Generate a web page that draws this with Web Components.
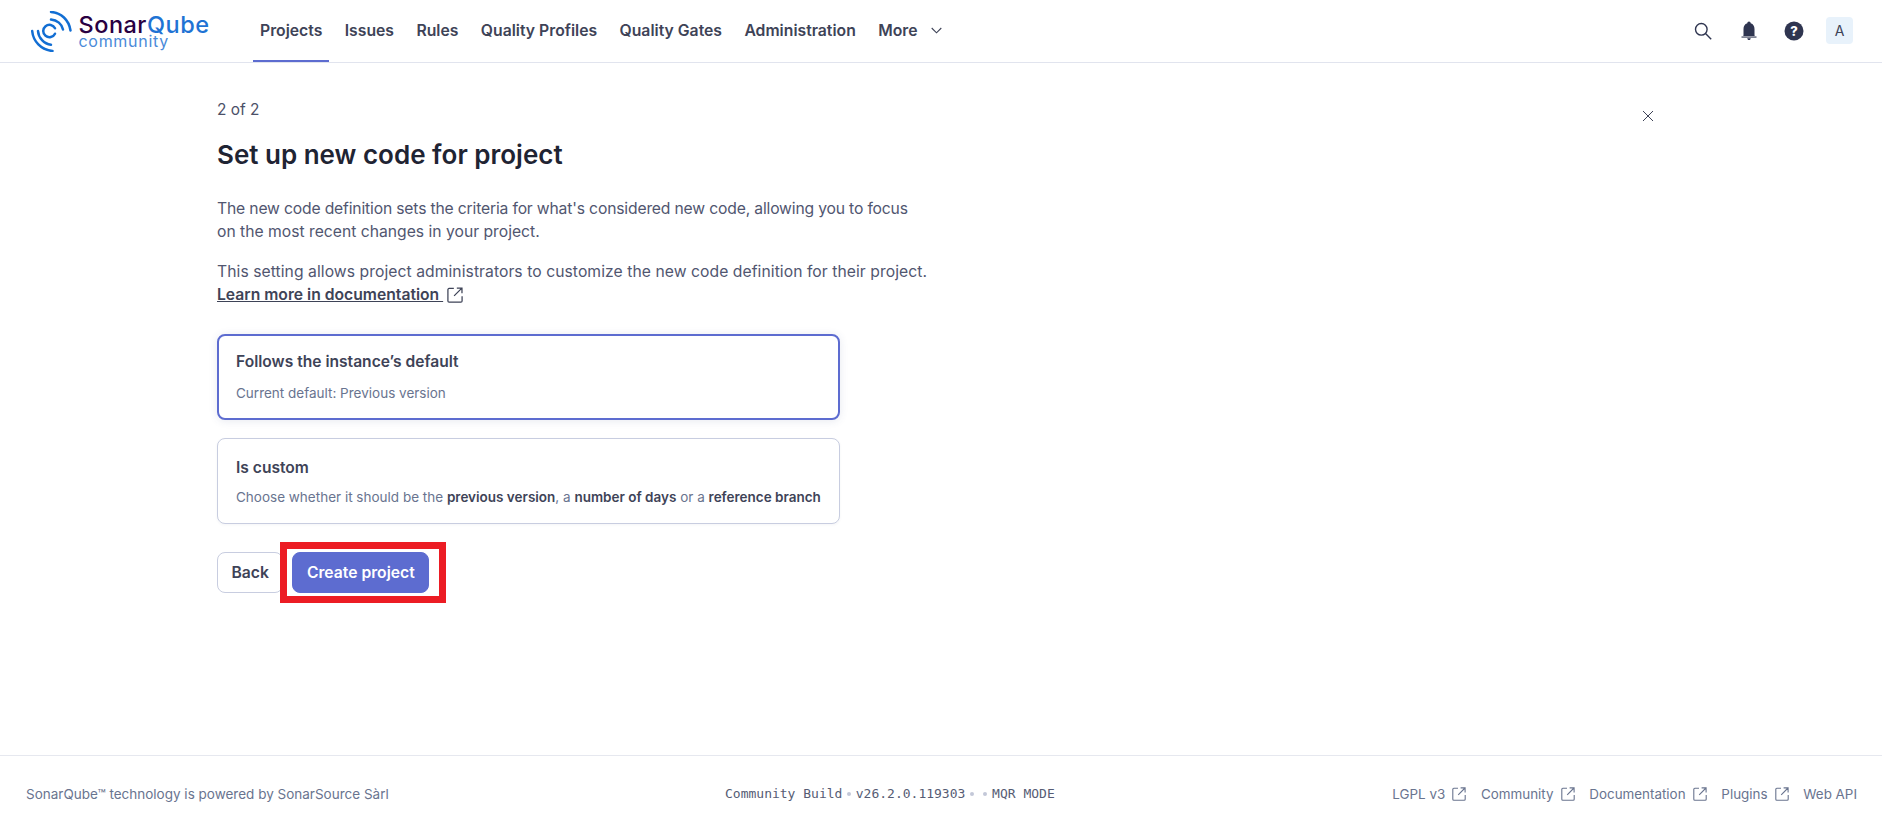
<!DOCTYPE html>
<html lang="en"><head><meta charset="utf-8"><title>SonarQube</title>
<style>
html,body{margin:0;height:100%;background:#fff;font-family:Inter,"Liberation Sans",sans-serif;color:#3e4357}
body{overflow:hidden}
</style></head><body>
<sq-app></sq-app>
<script>
const extIcon=(s=14)=>`<svg width="${s}" height="${s}" viewBox="0 0 14 14" fill="none" stroke="currentColor" stroke-width="1.1" style="flex:none;display:block"><path d="M6 1.300H1.800a1 1 0 0 0-1 1v9.900a1 1 0 0 0 1 1h10.400a1 1 0 0 0 1-1V8M8.600.9h4.500v4.500M13 1 6.200 7.800"/></svg>`;
function def(name,html){
  customElements.define(name,class extends HTMLElement{
    constructor(){super();this.attachShadow({mode:'open'}).innerHTML=html;}
  });
}
def('sq-logo',`<style>
:host{display:flex;align-items:center;gap:6.500px;width:181px;flex:none;padding-left:31px;height:62px;align-self:flex-start}
.t{display:flex;flex-direction:column}
.a{font:500 23.500px/20px Inter,sans-serif;letter-spacing:.5px;color:#290042;white-space:nowrap;padding-top:1px}
.a span{color:#1f73d4}
.b{font:400 16px/15px Inter,sans-serif;color:#4a8ad9;letter-spacing:.7px;margin-top:-1px}
svg{display:block;flex:none}
</style>
<svg width="41" height="41" viewBox="0 0 41 41" fill="none" stroke="#126ed3" stroke-width="2.500" stroke-linecap="round">
<path d="M20 1C30 1.500 38 9 39.500 19.500"/><path d="M20 8.500C26 9 31 13 32 18.500"/>
<path d="M24 17.300A6.200 6.200 0 1 0 24 22.700"/>
<path d="M1.200 20C2 30 10 39 21.500 40"/><path d="M7 20C7.500 27 13 33 20 33.800"/>
</svg>
<div class="t"><div class="a">Sonar<span>Qube</span></div><div class="b">community</div></div>`);
def('sq-nav-item',`<style>
:host{display:flex;align-items:center;height:62px;box-sizing:border-box;padding:0 7px;margin-right:8.400px;font:600 15.750px Inter,sans-serif;color:#3e4357;white-space:nowrap;border-bottom:2px solid transparent}
:host([active]){border-bottom-color:#5d6cd0}
</style><slot></slot>`);
def('sq-header',`<style>
:host{display:flex;align-items:flex-start;height:63px;flex:none;box-sizing:border-box;border-bottom:1px solid #e1e4ee;background:#fff}
nav{display:flex;margin-left:41px}
.r{margin-left:auto;display:flex;align-items:center;height:61px;padding-right:29px;color:#2f3550}
.i{display:flex;align-items:center;justify-content:center;width:45.500px;height:44px}
.av{width:27px;height:27px;margin-left:9px;border-radius:4px;background:#e8f2fb;font:400 14px/27px Inter,sans-serif;text-align:center;color:#3e4357}
.ch{margin-left:13px;display:block}
</style>
<sq-logo></sq-logo>
<nav>
<sq-nav-item active>Projects</sq-nav-item><sq-nav-item>Issues</sq-nav-item><sq-nav-item>Rules</sq-nav-item><sq-nav-item>Quality Profiles</sq-nav-item><sq-nav-item>Quality Gates</sq-nav-item><sq-nav-item>Administration</sq-nav-item>
<sq-nav-item>More<svg class="ch" width="11" height="7" viewBox="0 0 11 7" fill="none" stroke="#3e4357" stroke-width="1.100"><path d="M.7 1l4.800 4.800L10.300 1"/></svg></sq-nav-item>
</nav>
<div class="r">
<div class="i"><svg width="18" height="18" viewBox="0 0 18 18" fill="none" stroke="currentColor" stroke-width="1.400"><circle cx="7.300" cy="7.300" r="5.800"/><path d="M11.500 11.500l5.700 5.700"/></svg></div>
<div class="i"><svg width="18" height="20" viewBox="0 0 18 20" fill="currentColor"><path d="M9 .5c1 0 1.600.8 1.700 1.700C13.300 3 14.500 5.200 14.500 8v6.600l.4.4H3.100l.4-.4V8c0-2.800 1.200-5 3.800-5.800C7.400 1.300 8 .5 9 .5z"/><rect x="1.500" y="15.500" width="15" height="1.100"/><path d="M7.300 17.200h3.400c0 1-.7 1.900-1.700 1.900s-1.700-.9-1.700-1.900z"/></svg></div>
<div class="i"><svg width="20" height="20" viewBox="0 0 20 20"><circle cx="10" cy="10" r="9.500" fill="currentColor"/><text x="10" y="14.500" text-anchor="middle" font-family="Inter,sans-serif" font-weight="800" font-size="13" fill="#fff">?</text></svg></div>
<div class="av">A</div>
</div>`);
def('sq-card',`<style>
:host{display:block;box-sizing:border-box;width:623px;height:86px;border:1px solid #c8cde0;border-radius:8px;padding:18px 18px 0;background:#fff;box-shadow:0 1px 3px rgba(40,50,90,.05)}
:host([selected]){border:2px solid #5d6cd0;padding:15px 17px 0;box-shadow:0 1px 8px rgba(60,70,130,.12)}
.t{font:600 15.600px/22px Inter,sans-serif;color:#3e4357;margin-bottom:8px}
:host([selected]) .t{margin-bottom:10px}
.d{font:400 13.500px/20px Inter,sans-serif;color:#69748f;white-space:nowrap}
::slotted(b){font-weight:600;color:#3e4357}
</style><div class="t"><slot name="title"></slot></div><div class="d"><slot></slot></div>`);
def('sq-button',`<style>
:host{display:inline-flex;align-items:center;justify-content:center;box-sizing:border-box;height:41px;padding:0 13.500px;border-radius:8px;border:1px solid #c8cde0;background:#fff;font:600 15.700px Inter,sans-serif;color:#3e4357;white-space:nowrap}
:host([primary]){background:#5d6cd0;border-color:#5d6cd0;color:#fff}
</style><slot></slot>`);
def('sq-main',`<style>
:host{display:block;flex:1;position:relative;padding:36px 0 0 217px;min-height:0}
.s{font:400 15.400px/22px Inter,sans-serif;color:#4b5068}
h1{font:600 26px/32px Inter,sans-serif;color:#1f2433;margin:18px 0 26px}
p{margin:0 0 16px;font:400 15.700px/23.400px Inter,sans-serif;color:#515670;white-space:nowrap}
.tight{letter-spacing:-.17px}
.loose{letter-spacing:.06px}
a{font-weight:600;color:#3e4357;display:inline-flex;align-items:center;gap:4px;vertical-align:top;text-decoration:none}
a span{text-decoration:underline}
.x{position:absolute;left:1642px;top:47px;display:block}
.cards{display:flex;flex-direction:column;gap:18px;margin-top:27px}
.acts{display:flex;gap:9px;margin-top:28px;position:relative;align-items:flex-start}
.red{position:absolute;left:63px;top:-10px;width:166px;height:61px;box-sizing:border-box;border:7px solid #ec1c24}
</style>
<div class="s">2 of 2</div>
<svg class="x" width="12" height="12" viewBox="0 0 12 12" stroke="#3e4357" stroke-width="1"><path d="M1 1l10 10M11 1 1 11"/></svg>
<h1>Set up new code for project</h1>
<p><span class="tight">The new code definition sets the criteria for what's considered new code, allowing you to focus</span><br>on the most recent changes in your project.</p>
<p><span class="loose">This setting allows project administrators to customize the new code definition for their project.</span><br><a href="#"><span>Learn more in documentation&nbsp;</span>${extIcon(16)}</a></p>
<div class="cards">
<sq-card selected><span slot="title">Follows the instance’s default</span>Current default: Previous version</sq-card>
<sq-card><span slot="title">Is custom</span>Choose whether it should be the <b>previous version</b>, a <b>number of days</b> or a <b>reference branch</b></sq-card>
</div>
<div class="acts"><sq-button>Back</sq-button><sq-button primary>Create project</sq-button><div class="red"></div></div>`);
def('sq-footer',`<style>
:host{display:flex;align-items:center;justify-content:space-between;height:74px;flex:none;box-sizing:border-box;border-top:1px solid #e6e8ef;padding:2px 25px 0 26px;font:400 13.400px Inter,sans-serif;color:#69748f;white-space:nowrap}
.left{font-size:13.500px}
.c{font:400 13px "DejaVu Sans Mono",monospace;color:#565c74;display:flex;align-items:center;position:absolute;left:725px}
.c i{display:inline-block;width:4px;height:4px;border-radius:50%;background:#c3c8d8;margin:0 4.700px}
.l{display:flex;gap:14.800px}
.l span{display:flex;align-items:center;gap:7px}
</style>
<div class="left">SonarQube™ technology is powered by SonarSource Sàrl</div>
<div class="c">Community Build<i></i>v26.2.0.119303<i></i><i></i>MQR MODE</div>
<div class="l"><span>LGPL v3 ${extIcon()}</span><span>Community ${extIcon()}</span><span>Documentation ${extIcon()}</span><span>Plugins ${extIcon()}</span><span>Web API</span></div>`);
def('sq-app',`<style>:host{display:flex;flex-direction:column;height:829px;width:100%}</style><sq-header></sq-header><sq-main></sq-main><sq-footer></sq-footer>`);
</script>
</body></html>
